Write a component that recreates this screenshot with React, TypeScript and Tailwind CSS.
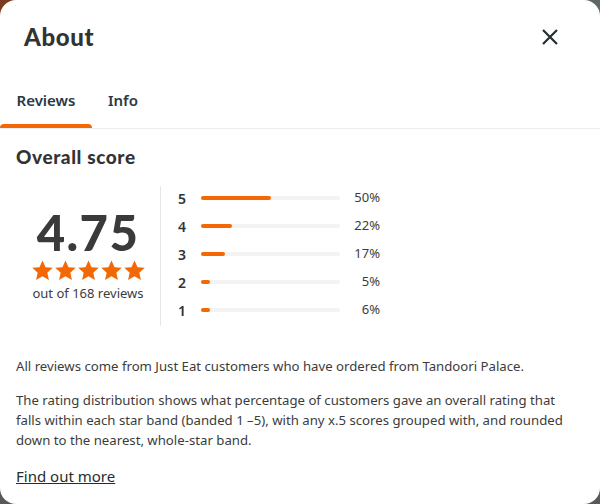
import React from 'react';

const rows = [
  { star: 5, pct: 50 },
  { star: 4, pct: 22 },
  { star: 3, pct: 17 },
  { star: 2, pct: 5 },
  { star: 1, pct: 6 },
];

const Star = () => (
  <svg viewBox="0 0 24 24" className="w-[23px] h-[23px]" fill="#f36805">
    <path d="M12 1.5l3.2 7 7.5.7-5.7 5.1 1.7 7.5L12 17.9l-6.7 3.9 1.7-7.5-5.7-5.1 7.5-.7z" />
  </svg>
);

export default function App() {
  return (
    <div className="w-[600px] h-[504px] bg-[conic-gradient(from_0deg_at_50%_50%,#5e6761_0deg_90deg,#595959_90deg_270deg,#7a3b1f_270deg_360deg)]">
      <div className="w-full h-full bg-white rounded-2xl flex flex-col text-[#242e30] font-['Noto_Sans',sans-serif]">
        {/* Header */}
        <div className="flex items-center justify-between pl-6 pr-[38px] h-[74px]">
          <h2 className="font-['Lato',sans-serif] font-black text-[24px] text-[#333] tracking-[0.6px]">About</h2>
          <svg viewBox="0 0 24 24" className="w-[24px] h-[24px]" stroke="#242e30" strokeWidth="2.2" fill="none">
            <path d="M5 5l14 14M19 5L5 19" />
          </svg>
        </div>

        {/* Tabs */}
        <div className="flex border-b border-[#ececec] h-[55px]">
          <div className="w-[92px] flex flex-col justify-center items-center relative pb-[2px]">
            <span className="text-[15px] font-semibold text-[#2a3846]">Reviews</span>
            <div className="absolute bottom-0 left-0 w-[92px] h-[4px] bg-[#f36805] rounded-t-sm" />
          </div>
          <div className="flex items-center pl-4 pb-[2px] text-[15px] font-semibold text-[#2a3846]">Info</div>
        </div>

        {/* Overall score */}
        <div className="px-4 pt-[16px]">
          <h3 className="font-['Lato',sans-serif] font-black text-[19px] tracking-[0.6px] text-[#333] leading-6">Overall score</h3>
          <div className="flex mt-[17px] h-[140px]">
            <div className="w-[144px] flex flex-col items-center pt-[24px]">
              <div className="font-['Lato',sans-serif] font-black text-[49px] leading-[44px] text-[#3a3a3a] tracking-[1.4px]">4.75</div>
              <div className="flex mt-[5px]">
                <Star /><Star /><Star /><Star /><Star />
              </div>
              <div className="text-[13px] text-[#3c3c3c] mt-[2px]">out of 168 reviews</div>
            </div>
            <div className="border-l border-[#e6e6e6] pl-[17px] pb-[4px] flex flex-col justify-center gap-[9px]">
              {rows.map(r => (
                <div key={r.star} className="flex items-center h-[19px]">
                  <span className="w-[23px] text-[14px] font-semibold text-[#333]">{r.star}</span>
                  <div className="w-[139px] h-[4px] bg-[#f5f3f1] rounded-full">
                    <div className="h-full bg-[#f36805] rounded-full min-w-[9px]" style={{ width: `${r.pct * 1.39}px` }} />
                  </div>
                  <span className="w-[40px] text-right text-[13px] text-[#3c3c3c]">{r.pct}%</span>
                </div>
              ))}
            </div>
          </div>
        </div>

        {/* Description */}
        <div className="pl-4 pr-[25px] pt-[30px] text-[13.2px] leading-5 text-[#3c3c3c]">
          <p>All reviews come from Just Eat customers who have ordered from Tandoori Palace.</p>
          <p className="mt-[14px]">
            The rating distribution shows what percentage of customers gave an overall rating that falls within each star band (banded 1 –5), with any x.5 scores grouped with, and rounded down to the nearest, whole-star band.
          </p>
          <a className="block mt-[16px] text-[15px] underline text-[#242e30]">Find out more</a>
        </div>
      </div>
    </div>
  );
}
